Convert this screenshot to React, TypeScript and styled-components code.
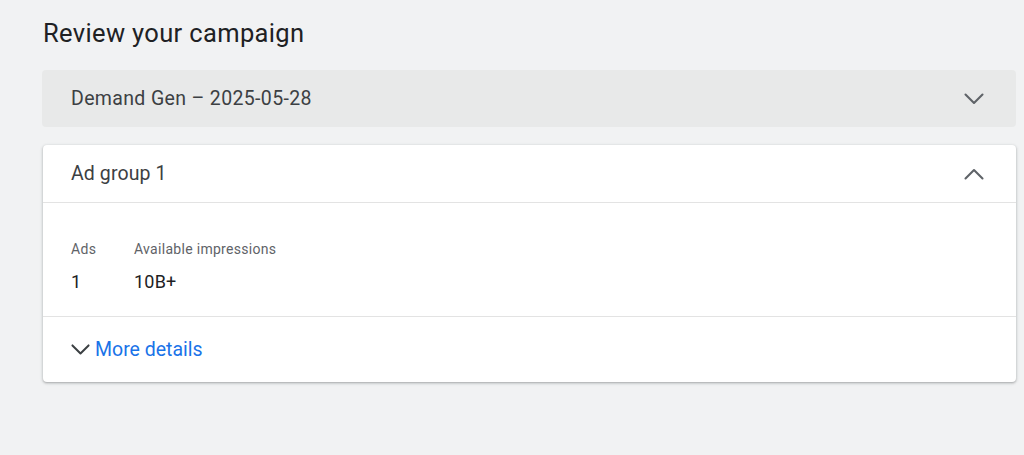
import styled, { createGlobalStyle } from 'styled-components';

const GlobalStyle = createGlobalStyle`
  html, body {
    margin: 0;
    padding: 0;
    background: #f1f2f3;
  }
  body {
    font-family: Roboto, "Noto Sans", Arial, sans-serif;
    color: #3c4043;
  }
`;

type TDir = 'up' | 'down';

const Chevron = ({ dir, size = 20, color = '#5f6368' }: { dir: TDir; size?: number; color?: string }) => (
  <svg width={size} height={size * 0.6} viewBox="0 0 20 12" fill="none">
    <polyline
      points={dir === 'down' ? '1.5,1.5 10,10 18.5,1.5' : '1.5,10.5 10,2 18.5,10.5'}
      stroke={color}
      strokeWidth="2.1"
      strokeLinecap="round"
      strokeLinejoin="round"
    />
  </svg>
);

const Page = styled.main`
  padding: 17px 8px 0 42px;
  min-height: 455px;
  box-sizing: border-box;
`;

const Title = styled.h1`
  margin: 0 0 21px 1px;
  font-size: 25.5px;
  line-height: 32px;
  font-weight: 400;
  color: #202124;
  letter-spacing: 0.35px;
`;

const Section = styled.section<{ $open?: boolean }>`
  background: ${({ $open }) => ($open ? '#fff' : '#e8e9e9')};
  border-radius: 4px;
  margin: ${({ $open }) => ($open ? '0 0 0 1px' : '0 0 18px')};
  box-shadow: ${({ $open }) =>
    $open ? '0 1px 2px rgba(60,64,67,0.3), 0 1px 3px 1px rgba(60,64,67,0.12)' : 'none'};
  overflow: hidden;
`;

const Header = styled.div<{ $open?: boolean }>`
  height: 57px;
  display: flex;
  align-items: center;
  justify-content: space-between;
  padding: ${({ $open }) => ($open ? '0 32px 0 28px' : '0 32px 0 29px')};
  border-bottom: ${({ $open }) => ($open ? '1px solid #e3e3e3' : 'none')};
`;

const HeaderText = styled.span<{ $wide?: boolean }>`
  font-size: 19.5px;
  color: #3c4043;
  letter-spacing: ${({ $wide }) => ($wide ? '0.35px' : '0.1px')};
`;

const Stats = styled.div`
  display: flex;
  padding: 36px 28px 22px;
  border-bottom: 1px solid #e3e3e3;
`;

const Stat = styled.div<{ $w?: number }>`
  display: flex;
  flex-direction: column;
  gap: 11px;
  width: ${({ $w }) => ($w ? `${$w}px` : 'auto')};
`;

const StatLabel = styled.span`
  font-size: 14px;
  line-height: 20px;
  color: #5f6368;
  letter-spacing: 0.3px;
`;

const StatValue = styled.span`
  font-size: 18px;
  line-height: 24px;
  color: #202124;
  letter-spacing: 0.2px;
`;

const Footer = styled.div`
  height: 65px;
  display: flex;
  align-items: center;
  padding: 0 28px;
`;

const MoreButton = styled.button`
  display: flex;
  align-items: center;
  gap: 5px;
  border: 0;
  background: none;
  padding: 0;
  cursor: pointer;
  font-family: inherit;
  font-size: 19.5px;
  color: #1a73e8;
`;

export default function App() {
  return (
    <>
      <GlobalStyle />
      <Page>
        <Title>Review your campaign</Title>
        <Section>
          <Header>
            <HeaderText $wide>Demand Gen – 2025-05-28</HeaderText>
            <Chevron dir="down" />
          </Header>
        </Section>
        <Section $open>
          <Header $open>
            <HeaderText>Ad group 1</HeaderText>
            <Chevron dir="up" />
          </Header>
          <Stats>
            <Stat $w={63}>
              <StatLabel>Ads</StatLabel>
              <StatValue>1</StatValue>
            </Stat>
            <Stat>
              <StatLabel>Available impressions</StatLabel>
              <StatValue>10B+</StatValue>
            </Stat>
          </Stats>
          <Footer>
            <MoreButton>
              <Chevron dir="down" size={19} color="#3c4043" />
              More details
            </MoreButton>
          </Footer>
        </Section>
      </Page>
    </>
  );
}
